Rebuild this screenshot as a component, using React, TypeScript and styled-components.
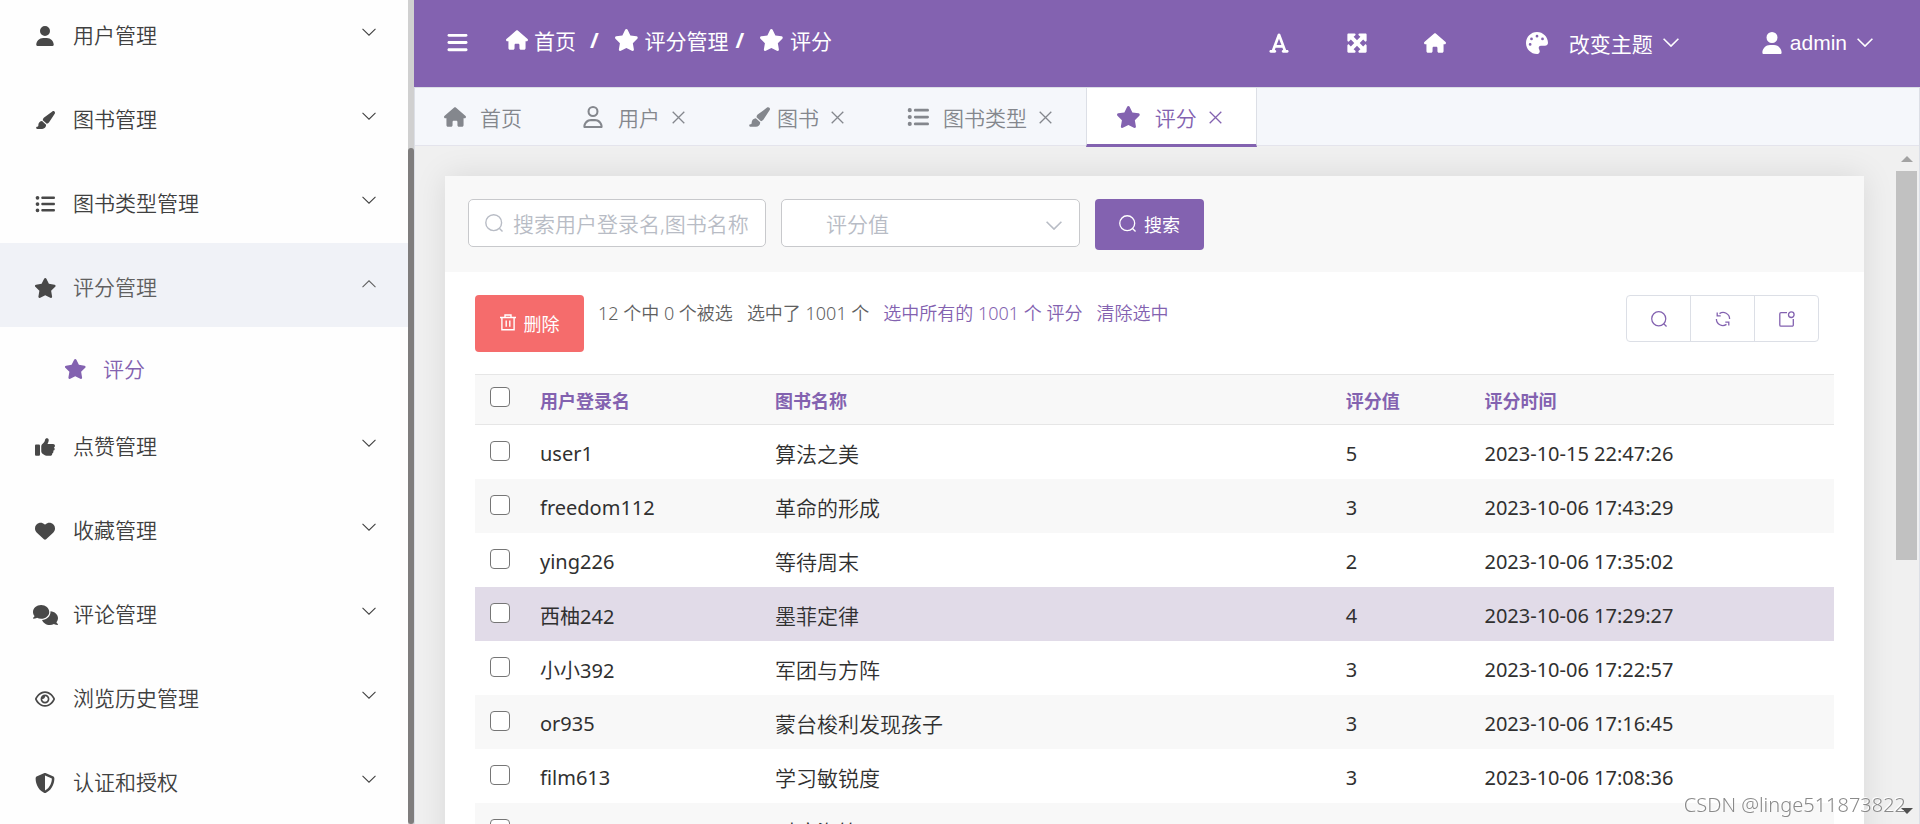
import React, { useState } from "react";
import styled, { createGlobalStyle, css } from "styled-components";
import {
  FaUser,
  FaRegUser,
  FaPaintbrush,
  FaListUl,
  FaThumbsUp,
  FaHeart,
  FaRegEye,
  FaShieldHalved,
  FaBars,
  FaHouse,
  FaFont,
  FaMaximize,
  FaPalette,
} from "react-icons/fa6";

const purple = "#8362b0";
const line = "#dcdfe6";
const sans = '"Noto Sans", "Noto Sans CJK SC", sans-serif';

const GlobalStyle = createGlobalStyle`
  * { box-sizing: border-box; }
  body {
    margin: 0;
    overflow: hidden;
    background: #fff;
    color: #333;
    font-family: ${sans};
    font-size: 21px;
    font-weight: 350;
  }
  button, input, select { font: inherit; }
  button { border: 0; background: none; padding: 0; color: inherit; cursor: pointer; }
  a { color: inherit; text-decoration: none; }
  svg { display: block; flex: none; }
`;

const Shell = styled.div`
  display: flex;
  height: 100vh;
`;

/* ---------- sidebar ---------- */

const Sidebar = styled.aside`
  flex: none;
  display: flex;
  width: 414px;
  overflow: hidden;
  background: #fefefe;
`;

const Menu = styled.nav`
  flex: 1;
  margin-top: -9px;
`;

const MenuItem = styled.button<{ $open?: boolean }>`
  display: flex;
  align-items: center;
  width: 100%;
  height: 84px;
  padding: 2px 32px 0 30px;
  background: ${(p) => (p.$open ? "#f0f2f7" : "transparent")};
  color: ${(p) => (p.$open ? "#606060" : "#404040")};
`;

const MenuIcon = styled.span`
  display: flex;
  justify-content: center;
  width: 30px;
  margin: 3px 13px 0 0;
  color: #484848;

  svg {
    width: auto;
    height: 20px;
  }
`;

const MenuChevron = styled.span`
  margin: 0 0 4px auto;
`;

const SubItem = styled.a`
  display: flex;
  align-items: center;
  height: 75px;
  padding: 6px 0 0 60px;
  color: ${purple};

  ${MenuIcon} {
    color: ${purple};
  }
`;

const SideTrack = styled.div`
  width: 6px;
  padding-top: 148px;
  background: #d0d0d0;
`;

const SideThumb = styled.div`
  height: 100%;
  border-radius: 3px;
  background: #7f7d7d;
`;

/* ---------- header ---------- */

const Main = styled.main`
  flex: 1;
  display: flex;
  flex-direction: column;
  min-width: 0;
`;

const Header = styled.header`
  flex: none;
  display: flex;
  align-items: center;
  height: 87px;
  padding: 0 47px 2px 32px;
  background: ${purple};
  color: #fff;
  font-weight: 400;
`;

const ToggleButton = styled.button`
  margin-right: 37px;

  svg {
    width: auto;
    height: 23px;
  }
`;

const Breadcrumb = styled.nav`
  display: flex;
  align-items: center;
  padding-bottom: 6px;
`;

const Crumb = styled.a`
  display: flex;
  align-items: center;
  gap: 6px;

  svg {
    width: auto;
    height: 22px;
  }
`;

const Slash = styled.span<{ $tight?: boolean }>`
  padding: 0 15px 0 ${(p) => (p.$tight ? 7 : 14)}px;
  font-weight: 700;
`;

const Tools = styled.div`
  display: flex;
  align-items: center;
  margin-left: auto;
`;

const ToolButton = styled.button`
  display: flex;
  justify-content: center;
  width: 78px;

  svg {
    width: auto;
    height: 22px;
  }
`;

const HeaderMenu = styled.button<{ $gap: number; $indent: number }>`
  display: flex;
  align-items: center;
  margin-left: ${(p) => p.$indent}px;

  > svg:first-child {
    width: auto;
    height: 22px;
    margin-right: ${(p) => p.$gap}px;
  }
  > svg:last-child {
    margin-left: 10px;
  }
`;

const UserName = styled.span`
  font-family: "Liberation Sans", sans-serif;
`;

/* ---------- tabs ---------- */

const TabPanel = styled.div`
  flex: 1;
  display: flex;
  flex-direction: column;
  min-height: 0;
  border: 1px solid ${line};
  border-bottom: 0;
  background: #f0f0f0;
`;

const TabBar = styled.div`
  flex: none;
  display: flex;
  height: 58px;
  border-bottom: 1px solid #e4e4ec;
  background: #f5f7fb;
`;

const Tab = styled.div<{ $active?: boolean; $last?: boolean }>`
  display: flex;
  align-items: center;
  height: 59px;
  padding: 0 ${(p) => (p.$last ? 31 : 34)}px 1px 29px;
  color: #84878d;
  ${(p) =>
    p.$active &&
    css`
      border: solid ${line};
      border-width: 0 1px;
      padding-bottom: 0;
      padding-top: 2px;
      border-bottom: 3px solid ${purple};
      background: #fff;
      color: ${purple};
    `}
`;

const TabLink = styled.a<{ $gap: number }>`
  display: flex;
  align-items: center;
  gap: ${(p) => p.$gap}px;

  svg {
    width: auto;
    height: 22px;
  }
`;

const TabClose = styled.button`
  margin-left: 12px;
`;

/* ---------- page ---------- */

const Body = styled.div`
  flex: 1;
  display: flex;
  min-height: 0;
`;

const Scroller = styled.div`
  flex: 1;
  min-width: 0;
  overflow: hidden;
  padding: 30px 32px 0 30px;
`;

const Card = styled.section`
  min-height: 100%;
  background: #fff;
  box-shadow: 0 0 30px rgba(0, 0, 0, 0.1);
`;

const Filters = styled.form`
  display: flex;
  align-items: flex-start;
  gap: 15px;
  height: 96px;
  padding: 23px;
  background: #f8f8f8;
`;

const field = css`
  display: flex;
  align-items: center;
  width: 298px;
  height: 48px;
  border: 1px solid #c8c9cc;
  border-radius: 5px;
  background: #fff;
  color: #b8bcc5;
`;

const SearchField = styled.label`
  ${field}
  gap: 10px;
  padding-left: 16px;

  input {
    flex: 1;
    min-width: 0;
    height: 46px;
    padding: 2px 0 0;
    border: 0;
    outline: 0;
    background: none;
    color: #606266;
  }
  input::placeholder {
    color: #b8bcc5;
    opacity: 1;
  }
`;

const SelectField = styled.label`
  ${field}
  width: 299px;
  padding: 0 17px 0 0;

  select {
    flex: 1;
    height: 46px;
    padding: 2px 0 0 44px;
    border: 0;
    outline: 0;
    appearance: none;
    background: none;
    color: #b8bcc5;
  }
  svg {
    margin-top: 4px;
  }
`;

const ActionButton = styled.button<{ $danger?: boolean }>`
  flex: none;
  display: flex;
  align-items: center;
  justify-content: center;
  gap: 8px;
  width: 109px;
  height: ${(p) => (p.$danger ? 57 : 51)}px;
  padding-bottom: 2px;
  border-radius: 4px;
  background: ${(p) => (p.$danger ? "#f56c6c" : purple)};
  color: #fff;
  font-size: 18px;
  font-weight: 400;
`;

const Content = styled.div`
  padding: 23px 30px 0;
`;

const Toolbar = styled.div`
  display: flex;
  align-items: flex-start;
  padding-right: 15px;
  margin-bottom: 22px;
`;

const Summary = styled.div`
  display: flex;
  gap: 14px;
  padding: 5px 14px;
  color: #606060;
  font-size: 18px;
  line-height: 26px;

  a {
    color: ${purple};
  }
`;

const IconGroup = styled.div`
  display: flex;
  margin-left: auto;
  border: 1px solid ${line};
  border-radius: 4px;
`;

const IconButton = styled.button`
  display: flex;
  align-items: center;
  justify-content: center;
  width: 63px;
  height: 45px;
  color: ${purple};

  & + & {
    width: 64px;
    border-left: 1px solid ${line};
  }
`;

const Table = styled.table`
  width: 100%;
  table-layout: fixed;
  border-collapse: separate;
  border-spacing: 0;

  th,
  td {
    padding: 0 15px;
    text-align: left;
    white-space: nowrap;
  }
  th {
    height: 51px;
    border: solid #e6e6e6;
    border-width: 1px 0;
    background: #f8f8f8;
    color: ${purple};
    font-size: 18px;
    font-weight: 700;
  }
`;

const Row = styled.tr<{ $hover?: boolean }>`
  height: 54px;
  color: #303030;

  &:nth-child(even) {
    background: ${(p) => (p.$hover ? "#e1dbe8" : "#f8f8f8")};
  }
  td {
    padding-top: 2px;
  }
`;

const Latin = styled.td`
  font-size: 20px;
  font-weight: 400;
`;

const Col = styled.col<{ $w: string }>`
  width: ${(p) => p.$w};
`;

const Check = styled.input.attrs({ type: "checkbox" })`
  display: block;
  appearance: none;
  width: 20px;
  height: 20px;
  margin: 0 0 5px;
  border: 1px solid #767676;
  border-radius: 4px;
  background: #fff;

  &:checked {
    background: ${purple};
  }
`;

const ScrollBar = styled.div`
  display: flex;
  flex-direction: column;
  align-items: center;
  width: 23px;
  padding: 10px 2px 10px 0;
`;

const ScrollTrack = styled.div`
  flex: 1;
  align-self: stretch;
  margin: 9px 0;
`;

const ScrollThumb = styled.div`
  height: 62%;
  background: #c1c1c1;
`;

const Watermark = styled.div`
  position: fixed;
  right: 14px;
  bottom: 5px;
  color: #8a8a8a;
  font-size: 20px;
  line-height: 28px;
  text-shadow: -1px -1px 0 #fff;
`;

/* ---------- icons ---------- */

const StarIcon = () => (
  <svg viewBox="0 0 576 512" fill="currentColor">
    <path d="M316.9 18C311.6 7 300.4 0 288.1 0s-23.4 7-28.8 18L195 150.3 51.4 171.5c-12 1.8-22 10.2-25.7 21.7s-.7 24.2 7.9 32.7L137.8 329l-24.600 145.700c-2 12 3 24.200 12.900 31.300s23 8 33.800 2.300l128.300-68.500 128.300 68.500c10.800 5.700 23.900 4.900 33.800-2.300s14.900-19.300 12.900-31.300L438.500 329l104.200-103.100c8.600-8.500 11.700-21.200 7.900-32.700s-13.700-19.900-25.700-21.700L381.200 150.300 316.900 18z" />
  </svg>
);

const CommentsIcon = () => (
  <svg viewBox="0 0 640 512" fill="currentColor">
    <path d="M208 352c114.900 0 208-78.800 208-176S322.900 0 208 0S0 78.800 0 176c0 38.600 14.700 74.300 39.600 103.400c-3.500 9.400-8.700 17.700-14.200 24.700c-4.800 6.200-9.700 11-13.300 14.300c-1.800 1.600-3.300 2.900-4.300 3.700c-.5 .4-.9 .7-1.100 .8l-.2 .2C1 327.200-1.400 334.400 .8 340.900S9.100 352 16 352c21.800 0 43.800-5.600 62.100-12.500c9.200-3.500 17.800-7.400 25.200-11.400C134.100 343.300 169.800 352 208 352zM448 176c0 112.300-99.100 196.900-216.500 207C255.800 457.400 336.400 512 432 512c38.200 0 73.900-8.700 104.700-23.900c7.500 4 16 7.900 25.200 11.400c18.300 6.900 40.300 12.500 62.100 12.500c6.900 0 13.100-4.500 15.200-11.100c2.100-6.600-.2-13.800-5.800-17.900l-.2-.2c-.2-.2-.6-.4-1.100-.8c-1-.8-2.500-2-4.300-3.700c-3.600-3.300-8.500-8.100-13.300-14.300c-5.500-7-10.700-15.400-14.200-24.700c24.900-29 39.600-64.700 39.600-103.400c0-92.800-84.900-168.900-192.600-175.500c.4 5.100 .6 10.300 .6 15.500z" />
  </svg>
);

const Chevron = ({ w = 16, up = false, stroke = 1.6 }) => (
  <svg width={w} height={w / 2 + 1} viewBox="0 0 16 9" fill="none" stroke="currentColor" strokeWidth={stroke}>
    <path d={up ? "M.6 8.2 8 .9l7.400 7.300" : "M.6.8 8 8.100 15.400.8"} />
  </svg>
);

const Cross = () => (
  <svg width="13" height="13" viewBox="0 0 13 13" fill="none" stroke="currentColor" strokeWidth="1.300">
    <path d="m.7.7 11.600 11.600M12.300.7.7 12.300" />
  </svg>
);

const SearchIcon = ({ size = 16 }) => (
  <svg width={size} height={size} viewBox="0 0 18 18" fill="none" stroke="currentColor" strokeWidth="1.400">
    <circle cx="8.700" cy="8.700" r="7.900" />
    <path d="m14.300 14.300 3.200 3.200" />
  </svg>
);

const TrashIcon = () => (
  <svg width="16" height="17" viewBox="0 0 16 17" fill="none" stroke="currentColor" strokeWidth="1.400">
    <path d="M0 3.500h16M5 3.300V1h6v2.300M1.900 3.500v12.300h12.200V3.500M6.200 6.500v6.200M9.800 6.500v6.200" />
  </svg>
);

const RefreshIcon = () => (
  <svg width="16" height="16" viewBox="0 0 16 16" fill="none" stroke="currentColor" strokeWidth="1.300">
    <path d="M4.500 2.600A6.500 6.500 0 0 1 14.600 8M11.500 13.400A6.500 6.500 0 0 1 1.400 8" />
    <path d="M2.200 1.500v3.300h3.500M13.800 14.500v-3.300h-3.500" />
  </svg>
);

const BadgeIcon = () => (
  <svg width="16" height="16" viewBox="0 0 16 16" fill="none" stroke="currentColor" strokeWidth="1.300">
    <path d="M8 1.700H2A1.200 1.200 0 0 0 .8 2.900V14A1.200 1.200 0 0 0 2 15.200h11.100a1.200 1.200 0 0 0 1.200-1.200V8" />
    <circle cx="12.300" cy="3.700" r="2.800" />
  </svg>
);

const Arrow = ({ down = false }) => (
  <svg width="12" height="6" viewBox="0 0 12 6" fill={down ? "#505050" : "#a3a3a3"}>
    <path d={down ? "M0 0h12L6 6z" : "M0 6h12L6 0z"} />
  </svg>
);

/* ---------- data ---------- */

const menuTop = [
  { icon: <FaUser />, text: "用户管理" },
  { icon: <FaPaintbrush />, text: "图书管理" },
  { icon: <FaListUl />, text: "图书类型管理" },
  { icon: <StarIcon />, text: "评分管理", open: true },
];

const menuBottom = [
  { icon: <FaThumbsUp />, text: "点赞管理" },
  { icon: <FaHeart />, text: "收藏管理" },
  { icon: <CommentsIcon />, text: "评论管理" },
  { icon: <FaRegEye />, text: "浏览历史管理" },
  { icon: <FaShieldHalved />, text: "认证和授权" },
];

const tabs = [
  { icon: <FaHouse />, text: "首页", gap: 14, fixed: true },
  { icon: <FaRegUser />, text: "用户", gap: 14 },
  { icon: <FaPaintbrush />, text: "图书", gap: 7 },
  { icon: <FaListUl />, text: "图书类型", gap: 14 },
  { icon: <StarIcon />, text: "评分", gap: 14, active: true },
];

const rows = [
  ["user1", "算法之美", "5", "2023-10-15 22:47:26"],
  ["freedom112", "革命的形成", "3", "2023-10-06 17:43:29"],
  ["ying226", "等待周末", "2", "2023-10-06 17:35:02"],
  ["西柚242", "墨菲定律", "4", "2023-10-06 17:29:27"],
  ["小小392", "军团与方阵", "3", "2023-10-06 17:22:57"],
  ["or935", "蒙台梭利发现孩子", "3", "2023-10-06 17:16:45"],
  ["film613", "学习敏锐度", "3", "2023-10-06 17:08:36"],
  ["dream", "时痕海笔", "3", "2023-10-06 17:01:12"],
];

type Entry = { icon: React.ReactNode; text: string; open?: boolean };

const SideEntry = ({ icon, text, open }: Entry) => (
  <MenuItem $open={open} aria-expanded={!!open}>
    <MenuIcon>{icon}</MenuIcon>
    {text}
    <MenuChevron>
      <Chevron w={14} up={open} stroke={1.2} />
    </MenuChevron>
  </MenuItem>
);

export default function App() {
  const [keyword, setKeyword] = useState("");

  return (
    <>
      <GlobalStyle />
      <Shell>
        <Sidebar>
          <Menu>
            {menuTop.map((m) => (
              <SideEntry key={m.text} {...m} />
            ))}
            <SubItem href="#rating">
              <MenuIcon>
                <StarIcon />
              </MenuIcon>
              评分
            </SubItem>
            {menuBottom.map((m) => (
              <SideEntry key={m.text} {...m} />
            ))}
          </Menu>
          <SideTrack>
            <SideThumb />
          </SideTrack>
        </Sidebar>

        <Main>
          <Header>
            <ToggleButton aria-label="菜单">
              <FaBars />
            </ToggleButton>
            <Breadcrumb>
              <Crumb href="#home">
                <FaHouse />
                首页
              </Crumb>
              <Slash>/</Slash>
              <Crumb href="#ratings">
                <StarIcon />
                评分管理
              </Crumb>
              <Slash $tight>/</Slash>
              <Crumb href="#rating">
                <StarIcon />
                评分
              </Crumb>
            </Breadcrumb>
            <Tools>
              <ToolButton aria-label="字体">
                <FaFont />
              </ToolButton>
              <ToolButton aria-label="全屏">
                <FaMaximize />
              </ToolButton>
              <ToolButton aria-label="首页">
                <FaHouse />
              </ToolButton>
              <HeaderMenu $gap={21} $indent={52}>
                <FaPalette />
                改变主题
                <Chevron />
              </HeaderMenu>
              <HeaderMenu $gap={7} $indent={82}>
                <FaUser />
                <UserName>admin</UserName>
                <Chevron />
              </HeaderMenu>
            </Tools>
          </Header>

          <TabPanel>
            <TabBar>
              {tabs.map((t) => (
                <Tab key={t.text} $active={t.active} $last={t.fixed}>
                  <TabLink href="#tab" $gap={t.gap}>
                    {t.icon}
                    {t.text}
                  </TabLink>
                  {!t.fixed && (
                    <TabClose aria-label="关闭">
                      <Cross />
                    </TabClose>
                  )}
                </Tab>
              ))}
            </TabBar>

            <Body>
              <Scroller>
                <Card>
                  <Filters onSubmit={(e) => e.preventDefault()}>
                    <SearchField>
                      <SearchIcon size={18} />
                      <input
                        aria-label="搜索"
                        placeholder="搜索用户登录名,图书名称"
                        value={keyword}
                        onChange={(e) => setKeyword(e.target.value)}
                      />
                    </SearchField>
                    <SelectField>
                      <select aria-label="评分值">
                        <option>评分值</option>
                      </select>
                      <Chevron />
                    </SelectField>
                    <ActionButton type="submit">
                      <SearchIcon size={17} />
                      搜索
                    </ActionButton>
                  </Filters>

                  <Content>
                    <Toolbar>
                      <ActionButton $danger>
                        <TrashIcon />
                        删除
                      </ActionButton>
                      <Summary>
                        <span>12 个中 0 个被选</span>
                        <span>选中了 1001 个</span>
                        <a href="#all">选中所有的 1001 个 评分</a>
                        <a href="#clear">清除选中</a>
                      </Summary>
                      <IconGroup>
                        <IconButton aria-label="搜索">
                          <SearchIcon />
                        </IconButton>
                        <IconButton aria-label="刷新">
                          <RefreshIcon />
                        </IconButton>
                        <IconButton aria-label="导出">
                          <BadgeIcon />
                        </IconButton>
                      </IconGroup>
                    </Toolbar>

                    <Table>
                      <colgroup>
                        <Col $w="50px" />
                        <Col $w="17.3%" />
                        <Col $w="42%" />
                        <Col $w="10.2%" />
                        <Col $w="auto" />
                      </colgroup>
                      <thead>
                        <tr>
                          <th>
                            <Check aria-label="全选" />
                          </th>
                          <th>用户登录名</th>
                          <th>图书名称</th>
                          <th>评分值</th>
                          <th>评分时间</th>
                        </tr>
                      </thead>
                      <tbody>
                        {rows.map(([user, book, score, time], i) => (
                          <Row key={user} $hover={i === 3}>
                            <td>
                              <Check aria-label={user} />
                            </td>
                            <Latin>{user}</Latin>
                            <td>{book}</td>
                            <Latin>{score}</Latin>
                            <Latin>{time}</Latin>
                          </Row>
                        ))}
                      </tbody>
                    </Table>
                  </Content>
                </Card>
              </Scroller>
              <ScrollBar>
                <Arrow />
                <ScrollTrack>
                  <ScrollThumb />
                </ScrollTrack>
                <Arrow down />
              </ScrollBar>
            </Body>
          </TabPanel>
        </Main>
      </Shell>
      <Watermark>CSDN @linge511873822</Watermark>
    </>
  );
}
